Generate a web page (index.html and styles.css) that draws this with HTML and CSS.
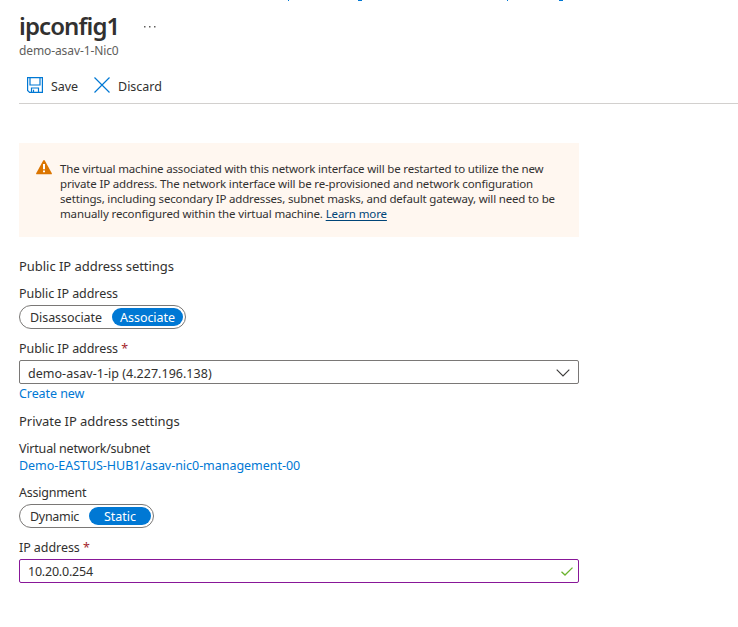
FILE: index.html
```html
<!DOCTYPE html>
<html lang="en">
<head>
<meta charset="utf-8">
<title>ipconfig1</title>
<link rel="stylesheet" href="styles.css">
</head>
<body>
<svg class="crumbs" width="738" height="1" viewBox="0 0 738 1" aria-hidden="true"><path d="M288 0h1v1h-1zM358 0h4v1h-4zM507 0h1v1h-1zM559 0h4v1h-4z"/></svg>
<main class="blade">
  <header class="head">
    <h1 class="title"><span>ipconfig1</span></h1>
    <svg class="more" width="14" height="4" viewBox="0 0 14 4"><path d="M1 1h1.5v1.5H1zM6 1h1.5v1.5H6zM11 1h1.5v1.5H11z"/></svg>
  </header>
  <p class="subtitle"><span>demo-asav-1-Nic0</span></p>
  <div class="toolbar">
    <button class="command save">
      <svg width="16" height="16" viewBox="0 0 16 16"><path d="M.6.6h14.8v14.8H2.6l-2-2zM3 .6V8h10V.6M4.5 15.4V11h7v4.4M6.5 12.8v2.6"/></svg>
      <span>Save</span>
    </button>
    <button class="command discard">
      <svg width="16" height="16" viewBox="0 0 16 16"><path d="M.5.5l15 15M15.500.5l-15 15"/></svg>
      <span>Discard</span>
    </button>
  </div>
  <section class="alert">
    <svg class="warning" width="16" height="15" viewBox="0 0 16 15"><path class="tri" d="M7.200.6Q8-.5 8.800.6L15.800 13.200Q16.200 14.300 15 14.300H1Q-.2 14.300.2 13.200z"/><path class="mark" d="M7 4h2v5.200H7zM7 10.400h2v1.800H7z"/></svg>
    <p class="message">
      <span class="l1">The virtual machine associated with this network interface will be restarted to utilize the new</span><br>
      <span class="l2">private IP address. The network interface will be re-provisioned and network configuration</span><br>
      <span class="l3">settings, including secondary IP addresses, subnet masks, and default gateway, will need to be</span><br>
      <span class="l4">manually reconfigured within the virtual machine. <a href="#">Learn more</a></span>
    </p>
  </section>
  <section class="public">
    <h2 class="heading">Public IP address settings</h2>
    <div class="label">Public IP address</div>
    <div class="toggle wide"><span class="option">Disassociate</span><span class="option on">Associate</span></div>
    <div class="label after">Public IP address <b>*</b></div>
    <div class="field select"><span>demo-asav-1-ip (4.227.196.138)</span>
      <svg width="14" height="8" viewBox="0 0 14 8"><path d="M.7.700 7 7 13.300.7"/></svg>
    </div>
    <a class="link create" href="#">Create new</a>
  </section>
  <section class="private">
    <h2 class="heading second">Private IP address settings</h2>
    <div class="label network">Virtual network/subnet</div>
    <a class="link subnet" href="#">Demo-EASTUS-HUB1/asav-nic0-management-00</a>
    <div class="label assignment">Assignment</div>
    <div class="toggle narrow"><span class="option">Dynamic</span><span class="option on">Static</span></div>
    <div class="label after address">IP address <b>*</b></div>
    <div class="field input"><span>10.20.0.254</span>
      <svg width="12" height="9" viewBox="0 0 12 9"><path d="M.5 4.700 4 8 11.500.6"/></svg>
    </div>
  </section>
</main>
</body>
</html>
```
FILE: styles.css
```css
* { box-sizing: border-box; }
body {
  margin: 0;
  height: 627px;
  overflow: hidden;
  background: #fff;
  color: #323130;
  font: 12.5px/18px "Noto Sans", "Open Sans", sans-serif;
  white-space: nowrap;
}
h1, h2, p { margin: 0; font-weight: 400; }
svg { flex: none; fill: none; }
a { color: #0078d4; text-decoration: none; }
.crumbs { display: block; fill: #0078d4; }
.blade { padding-left: 19px; }
.head { display: flex; height: 41px; padding-top: 9px; }
.title { width: 124px; font-size: 24px; line-height: 32px; font-weight: 600; letter-spacing: -.9px; }
.more { margin-top: 15px; fill: #605e5c; }
.subtitle { height: 18px; color: #605e5c; font-size: 12px; letter-spacing: -.1px; }
.toolbar { display: flex; height: 44px; padding: 17px 0 0 8px; border-bottom: 1px solid #d2d0ce; }
.command { display: flex; height: 18px; padding: 0; border: 0; background: none; color: inherit; font: inherit; }
.command svg { stroke: #0078d4; stroke-width: 1.2; }
.command span { padding-top: 1px; }
.save { width: 67px; gap: 8px; }
.save span { letter-spacing: -.1px; }
.discard { gap: 8px; }
.alert { display: flex; width: 560px; height: 94px; margin-top: 39px; padding: 18px 0 0 17px; background: #fff7f0; }
.warning { margin: -1px 8px 0 0; }
.tri { fill: #db7500; }
.mark { fill: #fff; }
.message { font-size: 11.5px; line-height: 15px; }
.l1 { letter-spacing: -.168px; }
.l2 { letter-spacing: -.157px; }
.l3 { letter-spacing: -.165px; }
.l4 { letter-spacing: -.13px; }
.message a { color: #004578; text-decoration: underline; text-underline-offset: 2px; }
.heading { margin-top: 20px; font-size: 13px; line-height: 18px; letter-spacing: -.04px; }
.label { height: 18px; margin-top: 9px; padding-top: 1px; letter-spacing: -.06px; }
.label b { color: #a4262c; font-weight: 400; }
.network { letter-spacing: -.2px; }
.assignment { letter-spacing: -.24px; }
.toggle { display: flex; height: 24px; margin-top: 3px; padding: 2px; border: 1px solid #7a7876; border-radius: 12px; line-height: 19px; }
.wide { width: 167px; letter-spacing: -.06px; }
.narrow { width: 135px; }
.option { width: 90px; padding-left: 8px; }
.narrow .option { width: 67px; letter-spacing: -.3px; }
.narrow .on { letter-spacing: 0; }
.on { flex: 1; height: 18px; padding: 0; border-radius: 9px; background: #0078d4; color: #fff; text-align: center; }
.after { margin-top: 10px; }
.field { display: flex; align-items: center; justify-content: space-between; width: 560px; height: 24px; margin-top: 3px; padding: 1px 8px 0; border: 1px solid #7a7876; border-radius: 2px; }
.select span { padding-top: 2px; letter-spacing: .03px; }
.select svg { stroke: #3b3a39; stroke-width: 1.1; }
.input { border-color: #881798; padding-right: 5px; letter-spacing: -.22px; }
.input svg { stroke: #6bb32e; stroke-width: 1.3; }
.link { display: block; width: max-content; height: 18px; padding-top: 1px; letter-spacing: -.035px; }
.create { letter-spacing: -.08px; }
.heading.second { margin-top: 10px; }
.subnet { margin-top: -1px; }
```
